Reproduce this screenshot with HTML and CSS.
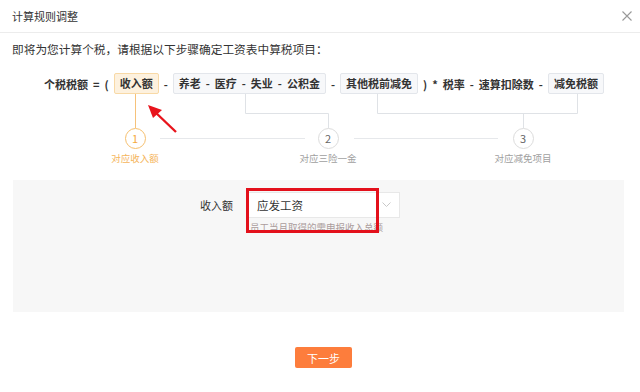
FILE: index.html
```html
<!DOCTYPE html>
<html lang="zh">
<head>
  <meta charset="UTF-8">
  <title>计算规则调整</title>
  <link rel="stylesheet" href="styles.css">
</head>
<body>

  <div class="header">
    <span class="title">计算规则调整</span>
    <svg class="close" width="10" height="10" viewBox="0 0 10 10">
      <path d="M0.5 0.5 L9.5 9.5 M9.5 0.5 L0.5 9.5" stroke="#999" stroke-width="1.1" fill="none"/>
    </svg>
  </div>

  <p class="intro">即将为您计算个税，请根据以下步骤确定工资表中算税项目：</p>

  <div class="diagram">
    <svg class="links" width="640" height="125" viewBox="0 55 640 125">
      <line x1="135.5" y1="94" x2="135.5" y2="128" stroke="#f6c27a" stroke-width="1"/>
      <polyline points="245.5,94 245.5,113.5 328.5,113.5 328.5,128" stroke="#dfe2e6" fill="none"/>
      <polyline points="377.5,94 377.5,113.5 577.5,113.5 577.5,94" stroke="#dfe2e6" fill="none"/>
      <line x1="523.5" y1="113.5" x2="523.5" y2="128" stroke="#dfe2e6"/>
      <line x1="160" y1="138.5" x2="305" y2="138.5" stroke="#e6e8eb"/>
      <line x1="354" y1="138.5" x2="498" y2="138.5" stroke="#e6e8eb"/>
      <line x1="176" y1="132" x2="154" y2="111" stroke="#e8141c" stroke-width="2.4"/>
      <polygon points="148,105 162,110 153,118" fill="#e8141c"/>
    </svg>

    <div class="formula">
      <span>个税税额</span>
      <span>=</span>
      <span>(</span>
      <span class="term active">收入额</span>
      <span>-</span>
      <span class="term">养老 &nbsp;-&nbsp; 医疗 &nbsp;-&nbsp; 失业 &nbsp;-&nbsp; 公积金</span>
      <span>-</span>
      <span class="term">其他税前减免</span>
      <span>)</span>
      <span>*</span>
      <span>税率</span>
      <span>-</span>
      <span>速算扣除数</span>
      <span>-</span>
      <span class="term">减免税额</span>
    </div>

    <div class="steps">
      <div class="step current">
        <div class="num">1</div>
        <div class="label">对应收入额</div>
      </div>
      <div class="step">
        <div class="num">2</div>
        <div class="label">对应三险一金</div>
      </div>
      <div class="step">
        <div class="num">3</div>
        <div class="label">对应减免项目</div>
      </div>
    </div>
  </div>

  <div class="panel">
    <div class="form-row">
      <div class="form-label">收入额</div>
      <div class="field">
        <div class="select">
          <span>应发工资</span>
          <svg width="9" height="6" viewBox="0 0 9 6">
            <path d="M0.5 0.5 L4.5 4.5 L8.5 0.5" stroke="#c8c8c8" fill="none"/>
          </svg>
        </div>
        <div class="hint">员工当月取得的需申报收入总额</div>
        <div class="mark"></div>
      </div>
    </div>
  </div>

  <div class="footer">
    <button class="next">下一步</button>
  </div>

</body>
</html>
```

FILE: styles.css
```css
* {
  box-sizing: border-box;
}
body {
  margin: 0;
  background: #fff;
  font-family: "Noto Sans CJK SC", "Noto Sans", sans-serif;
  font-size: 11px;
  color: #333;
}

.header {
  height: 33px;
  padding: 0 8px 0 12px;
  display: flex;
  align-items: center;
  justify-content: space-between;
  border-bottom: 1px solid #ececec;
}
.title {
  font-size: 11px;
  color: #333;
}

.intro {
  margin: 0;
  padding: 9px 12px 0;
  line-height: 13px;
  font-size: 11.7px;
  color: #333;
}

.diagram {
  position: relative;
  height: 125px;
  padding-top: 18px;
}
.links {
  position: absolute;
  top: 0;
  left: 0;
}

.formula {
  position: relative;
  display: flex;
  align-items: center;
  gap: 5px;
  padding-left: 44px;
  height: 21px;
  font-weight: bold;
  white-space: pre;
}
.term {
  height: 21px;
  line-height: 19px;
  padding: 0 5px;
  background: #f7f8fa;
  border: 1px solid #e3e6eb;
  border-radius: 2px;
}
.term.active {
  background: #fdf1de;
  border-color: #f8d9a6;
}

.steps {
  position: relative;
  display: grid;
  grid-template-columns: 192px 194px 196px;
  padding-left: 39px;
  margin-top: 34px;
}
.step {
  display: flex;
  flex-direction: column;
  align-items: center;
}
.num {
  width: 21px;
  height: 21px;
  border-radius: 50%;
  border: 1px solid #dcdcdc;
  background: #fff;
  color: #666;
  font-size: 11px;
  line-height: 19px;
  text-align: center;
}
.label {
  margin-top: 3px;
  font-size: 9.5px;
  line-height: 12px;
  color: #a0a0a0;
}
.step.current .num {
  border-color: #f6bf6e;
  color: #f5a941;
}
.step.current .label {
  color: #f5b55c;
}

.panel {
  margin: 0 16px 0 13px;
  height: 132px;
  background: #f7f7f7;
  padding-top: 12px;
}
.form-row {
  display: flex;
  align-items: flex-start;
}
.form-label {
  width: 220px;
  text-align: right;
  line-height: 26px;
  color: #333;
}
.field {
  position: relative;
  margin-left: 15px;
}
.select {
  width: 152px;
  height: 26px;
  background: #fff;
  border: 1px solid #e8e8e8;
  display: flex;
  align-items: center;
  justify-content: space-between;
  padding: 0 8px 0 8px;
  font-size: 11.5px;
  color: #333;
}
.hint {
  margin-top: 3px;
  padding-left: 2px;
  font-size: 9.5px;
  line-height: 12px;
  color: #ab9c9c;
  white-space: nowrap;
}
.mark {
  position: absolute;
  left: -2px;
  top: -4px;
  width: 133px;
  height: 45px;
  border: 3px solid #e3101b;
}

.footer {
  display: flex;
  justify-content: center;
  padding-left: 7px;
  margin-top: 35px;
}
.next {
  width: 57px;
  height: 21px;
  border: none;
  border-radius: 2px;
  background: #fd7d3c;
  color: #fff;
  font-family: inherit;
  font-size: 11px;
  padding: 0;
}
```
